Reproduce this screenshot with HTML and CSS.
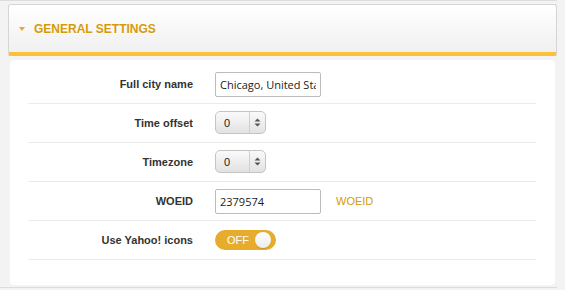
FILE: index.html
```html
<!DOCTYPE html>
<html lang="en">
<head>
    <meta charset="UTF-8">
    <meta name="viewport" content="width=device-width, initial-scale=1.0">
    <title>General Settings</title>
    <link rel="stylesheet" href="styles.css">
</head>
<body>
    <div class="page">
        <div class="section-header">
            <span class="caret"></span>
            <span class="section-title">GENERAL SETTINGS</span>
        </div>

        <div class="section-body">
            <div class="form-row">
                <label class="form-label">Full city name</label>
                <div class="form-field">
                    <input type="text" class="text-input" value="Chicago, United States">
                </div>
            </div>

            <div class="form-row">
                <label class="form-label">Time offset</label>
                <div class="form-field">
                    <div class="spin-select">
                        <span class="spin-value">0</span>
                        <span class="spin-arrows">
                            <svg width="7" height="9" viewBox="0 0 7 9"><path d="M3.5 0.5 L6.5 3.5 L0.5 3.5 Z M0.5 5.5 L6.5 5.5 L3.5 8.5 Z" fill="#555"/></svg>
                        </span>
                    </div>
                </div>
            </div>

            <div class="form-row">
                <label class="form-label">Timezone</label>
                <div class="form-field">
                    <div class="spin-select">
                        <span class="spin-value">0</span>
                        <span class="spin-arrows">
                            <svg width="7" height="9" viewBox="0 0 7 9"><path d="M3.5 0.5 L6.5 3.5 L0.5 3.5 Z M0.5 5.5 L6.5 5.5 L3.5 8.5 Z" fill="#555"/></svg>
                        </span>
                    </div>
                </div>
            </div>

            <div class="form-row">
                <label class="form-label">WOEID</label>
                <div class="form-field">
                    <input type="text" class="text-input" value="2379574">
                    <a href="#" class="field-link">WOEID</a>
                </div>
            </div>

            <div class="form-row">
                <label class="form-label">Use Yahoo! icons</label>
                <div class="form-field">
                    <div class="toggle">
                        <span class="toggle-text">OFF</span>
                        <span class="toggle-knob"></span>
                    </div>
                </div>
            </div>
        </div>

        <div class="bottom-edge"></div>
    </div>
</body>
</html>
```

FILE: styles.css
```css
body {
    margin: 0;
    padding: 0;
    background-color: #f3f3f3;
    font-family: "Liberation Sans", Arial, sans-serif;
}

.page {
    border-top: 1px solid #dcdcdc;
    width: 557px;
    padding-top: 3px;
}

.section-header {
    display: flex;
    align-items: center;
    margin-left: 8px;
    height: 47px;
    border: 1px solid #d5d5d5;
    border-bottom: 4px solid #fcc13b;
    border-radius: 3px 3px 2px 2px;
    background: linear-gradient(#ffffff, #f0f0f0);
    padding-left: 10px;
}

.caret {
    width: 0;
    height: 0;
    border-left: 3.5px solid transparent;
    border-right: 3.5px solid transparent;
    border-top: 4px solid #eaa827;
    margin-right: 9px;
    margin-top: 1px;
}

.section-title {
    font-size: 12px;
    font-weight: bold;
    color: #d59a08;
    text-shadow: 0 1px 0 #fff;
}

.section-body {
    margin: 4px 2px 0 10px;
    background-color: #fff;
    border-radius: 4px;
    padding: 5px 19px 25px 18px;
}

.form-row {
    display: flex;
    align-items: center;
    height: 38px;
    border-bottom: 1px solid #ebebeb;
}

.form-label {
    width: 165px;
    text-align: right;
    font-size: 11px;
    font-weight: bold;
    color: #333;
    margin-right: 22px;
}

.form-field {
    display: flex;
    align-items: center;
}

.text-input {
    box-sizing: border-box;
    width: 106px;
    height: 25px;
    border: 1px solid #bcbcbc;
    border-radius: 2px;
    padding: 0 4px;
    font-family: "Open Sans", sans-serif;
    font-size: 11px;
    color: #222;
    outline: none;
}

.field-link {
    margin-left: 15px;
    font-size: 11px;
    color: #d69c00;
    text-decoration: none;
}

.spin-select {
    box-sizing: border-box;
    display: flex;
    width: 51px;
    height: 23px;
    border: 1px solid #c4c4c4;
    border-radius: 5px;
    background: linear-gradient(#fafafa, #e2e2e2);
    margin-top: -1px;
}

.spin-value {
    flex: 1;
    display: flex;
    align-items: center;
    padding-left: 8px;
    font-size: 11px;
    color: #222;
}

.spin-arrows {
    width: 15px;
    display: flex;
    align-items: center;
    justify-content: center;
    border-left: 1px solid #cfcfcf;
}

.toggle {
    position: relative;
    box-sizing: border-box;
    width: 61px;
    height: 20px;
    border-radius: 10px;
    background-color: #e8ac2c;
    display: flex;
    align-items: center;
    padding-left: 12px;
}

.toggle-text {
    font-size: 11px;
    color: #fff;
}

.toggle-knob {
    position: absolute;
    right: 5px;
    top: 2px;
    width: 16px;
    height: 16px;
    border-radius: 50%;
    background: linear-gradient(#ffffff, #ececec);
    box-shadow: 0 1px 1px rgba(0, 0, 0, 0.15);
}

.bottom-edge {
    margin-top: 2px;
    border-top: 1px solid #dcdcdc;
}
```
